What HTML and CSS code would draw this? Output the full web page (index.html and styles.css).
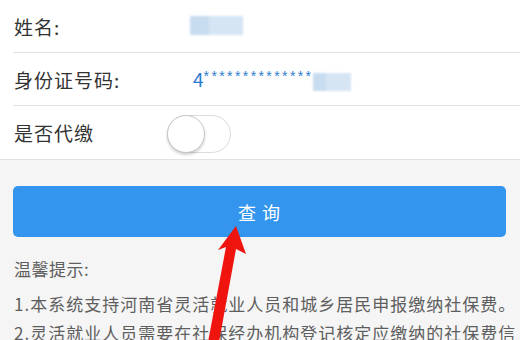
FILE: index.html
```html
<!DOCTYPE html>
<html lang="zh">
<head>
<meta charset="utf-8">
<link rel="stylesheet" href="styles.css">
</head>
<body>
<div class="page">
  <div class="form">
    <div class="row">
      <span class="label">姓名:</span>
      <span class="value"><span class="blur blur-name"></span></span>
    </div>
    <div class="row">
      <span class="label">身份证号码:</span>
      <span class="value id">4<span class="stars">**************</span><span class="blur blur-id"></span></span>
    </div>
    <div class="row last">
      <span class="label">是否代缴</span>
      <span class="toggle"><span class="knob"></span></span>
    </div>
  </div>
  <div class="lower">
    <button class="btn">查 询</button>
    <div class="tips">
      <p>温馨提示:</p>
      <p>1.本系统支持河南省灵活就业人员和城乡居民申报缴纳社保费。</p>
      <p class="cut">2.灵活就业人员需要在社保经办机构登记核定应缴纳的社保费信</p>
    </div>
  </div>
  <svg class="arrow" width="520" height="340" viewBox="0 0 520 340">
    <path d="M208 342 L226 247 L218 250 L236 226 L246 254 L236 249 L219 342 Z" fill="#f0140f"/>
  </svg>
</div>
</body>
</html>
```
FILE: styles.css
```css
html, body {
  margin: 0;
  padding: 0;
  width: 520px;
  height: 340px;
  overflow: hidden;
  background: #f5f5f5;
  font-family: "Noto Sans CJK SC", "Noto Sans", sans-serif;
}
.page {
  position: relative;
  width: 520px;
  height: 340px;
  overflow: hidden;
}
.form {
  background: #fff;
  padding-left: 13px;
  border-bottom: 1px solid #e2e2e2;
}
.row {
  height: 52px;
  display: flex;
  align-items: center;
  border-bottom: 1px solid #e2e2e2;
}
.row.last {
  border-bottom: none;
  height: 53px;
}
.label {
  width: 179px;
  font-size: 19px;
  letter-spacing: 1px;
  color: #333;
  padding-left: 1px;
}
.row.last .label { width: 153px; }
.value {
  display: flex;
  align-items: center;
  font-size: 19px;
  color: #2b7bd0;
}
.value.id { position: relative; top: -1px; }
.stars {
  font-family: "Liberation Sans", sans-serif;
  font-size: 14px;
  letter-spacing: 2.4px;
  align-self: flex-start;
  margin-top: 3px;
}
.blur {
  display: inline-block;
  background: linear-gradient(90deg, #c8dcf0 0%, #c8dcf0 35%, #d6e5f4 35%, #d6e5f4 100%);
  filter: blur(1px);
}
.blur-name {
  width: 53px;
  height: 19px;
  margin-left: -3px;
  margin-top: -2px;
}
.blur-id {
  width: 38px;
  height: 18px;
  margin-left: 0;
  margin-top: 8px;
}
.toggle {
  position: relative;
  width: 62px;
  height: 36px;
  border: 1px solid #dcdcdc;
  border-radius: 19px;
  background: #fff;
  margin-top: 3px;
}
.knob {
  position: absolute;
  left: -1px;
  top: -1px;
  width: 36px;
  height: 36px;
  border-radius: 50%;
  border: 1px solid #c8c8c8;
  background: #fff;
  box-shadow: 0 2px 3px rgba(0,0,0,0.18);
}
.lower {
  padding: 26px 14px 0 13px;
}
.btn {
  display: block;
  width: 100%;
  height: 51px;
  border: none;
  border-radius: 5px;
  background: #3395ed;
  color: #fff;
  font-family: "Noto Sans CJK SC", sans-serif;
  font-size: 18px;
  letter-spacing: 1px;
}
.tips {
  padding-left: 1px;
  margin-top: 16px;
  color: #5e5e5e;
  font-size: 17px;
}
.tips p {
  margin: 0;
  line-height: 32px;
  white-space: nowrap;
}
.tips p:first-child { margin-bottom: 3px; letter-spacing: 0.5px; }
.tips p + p { letter-spacing: 1px; }
.tips p.cut { line-height: 26px; }
.arrow {
  position: absolute;
  left: 0;
  top: 0;
  pointer-events: none;
}
```
